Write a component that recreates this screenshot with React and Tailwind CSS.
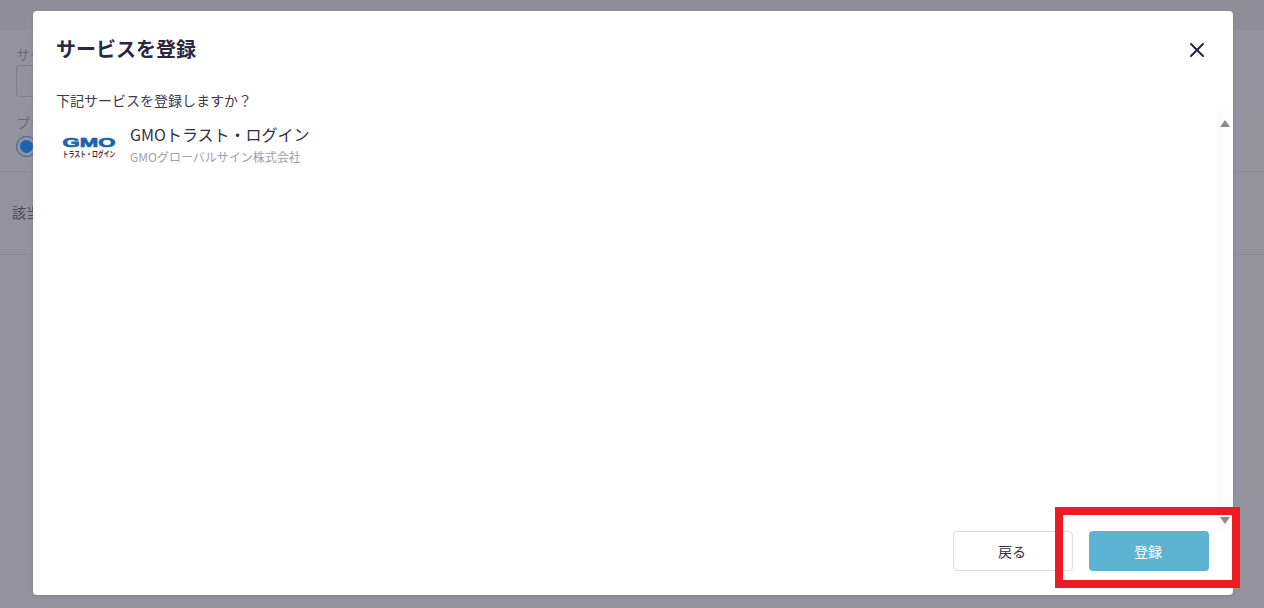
const font = { fontFamily: '"Noto Sans CJK JP", "Noto Sans", sans-serif' };

function GmoLogo() {
  return (
    <svg width="56" height="30" viewBox="0 0 56 30" className="shrink-0">
      <text x="28" y="15" textAnchor="middle" textLength="53" lengthAdjust="spacingAndGlyphs" fontFamily="Liberation Sans, sans-serif" fontWeight="700" fontSize="13.5" stroke="#1b64ae" strokeWidth="0.7" fill="#1b64ae">
        GMO
      </text>
      <text x="28" y="25" textAnchor="middle" textLength="53" lengthAdjust="spacingAndGlyphs" fontFamily="Noto Sans CJK JP, sans-serif" fontWeight="700" fontSize="8" fill="#5c2430">
        トラスト・ログイン
      </text>
    </svg>
  );
}

function Backdrop() {
  return (
    <div className="h-[608px] bg-[#94929c] text-[#4a4853]">
      <div className="h-[30px] bg-[#8f8d98]" />
      <div className="h-[142px] border-b border-[#8b8994] px-4 pt-[14px]">
        <p className="text-sm leading-5 text-[#6d6b76]">サービス名</p>
        <div className="mt-[1px] h-[32px] w-[300px] rounded border border-[#7f7d88]" />
        <p className="mt-[15px] text-sm leading-5 text-[#6d6b76]">プラン</p>
        <div className="mt-[4px] flex h-[21px] w-[21px] items-center justify-center rounded-full border border-[#1b64ae]">
          <div className="h-[13px] w-[13px] rounded-full bg-[#1b64ae]" />
        </div>
      </div>
      <div className="flex h-[83px] items-center border-b border-[#8b8994] px-3 pb-[2px] text-sm">
        該当するサービスはありません
      </div>
    </div>
  );
}

function Scrollbar() {
  return (
    <div className="flex h-full w-4 shrink-0 flex-col items-center justify-between bg-[#fcfcfc] pt-[9px] pb-[6px]">
      <div className="h-0 w-0 border-x-[5px] border-b-[7px] border-x-transparent border-b-[#8a8a8a]" />
      <div className="h-0 w-0 border-x-[5px] border-t-[7px] border-x-transparent border-t-[#8a8a8a]" />
    </div>
  );
}

export default function App() {
  return (
    <div className="relative h-[608px] w-[1264px] overflow-hidden" style={font}>
      <Backdrop />

      {/* modal */}
      <div className="absolute top-[11px] left-[33px] flex h-[584px] w-[1200px] flex-col rounded bg-white shadow-sm">
        <div className="flex h-[78px] items-center justify-between pr-[28px] pb-[1px] pl-[23px]">
          <h2 className="-mt-[2px] text-xl leading-7 font-bold text-[#2a2840]">サービスを登録</h2>
          <svg width="16" height="16" viewBox="0 0 16 16" fill="none" stroke="#26243c" strokeWidth="2" strokeLinecap="round">
            <path d="M2 2 14 14M14 2 2 14" />
          </svg>
        </div>

        <div className="flex h-[22px] items-center pl-[23px] text-sm text-[#3c3a4c]">下記サービスを登録しますか？</div>

        <div className="flex min-h-0 flex-1">
          <div className="flex-1 pl-[28px]">
            <div className="mt-[10px] flex items-start gap-[15px]">
              <div className="pt-[11px]">
                <GmoLogo />
              </div>
              <div className="-ml-[2px]">
                <p className="text-base leading-[26px] text-[#33313f]">GMOトラスト・ログイン</p>
                <p className="mt-[1px] text-xs leading-[18px] text-[#a1a1a8]">GMOグローバルサイン株式会社</p>
              </div>
            </div>
          </div>
          <div className="mb-[65px]">
            <Scrollbar />
          </div>
        </div>

        <div className="absolute right-6 bottom-6 flex gap-4">
          <button className="h-10 w-[120px] rounded border border-[#dcdcdc] bg-white pr-[2px] text-sm text-[#33313f]">戻る</button>
          <button className="h-10 w-[120px] rounded bg-[#5cb4d2] pr-[2px] text-sm text-white">登録</button>
        </div>
      </div>

      {/* annotation */}
      <div className="absolute top-[507px] left-[1055px] h-[81px] w-[185px] border-[8px] border-[#ed1c24]" />
    </div>
  );
}
